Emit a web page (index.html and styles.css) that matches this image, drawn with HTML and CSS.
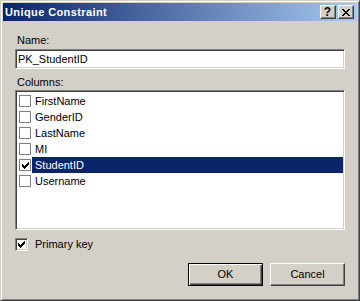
FILE: index.html
```html
<!DOCTYPE html>
<html>
<head>
<meta charset="utf-8">
<link rel="stylesheet" href="styles.css">
</head>
<body>
<div class="window">
  <div class="titlebar">
    <span class="title">Unique Constraint</span>
    <div class="capbtns">
      <div class="capbtn help">?</div>
      <div class="capbtn close">
        <svg width="8" height="7" viewBox="0 0 8 7" shape-rendering="crispEdges"><path d="M0 0h2v1h-2zM6 0h2v1h-2zM1 1h2v1h-2zM5 1h2v1h-2zM2 2h4v1h-4zM3 3h2v1h-2zM2 4h4v1h-4zM1 5h2v1h-2zM5 5h2v1h-2zM0 6h2v1h-2zM6 6h2v1h-2z" fill="#000"/></svg>
      </div>
    </div>
  </div>
  <div class="content">
    <div class="label name-label">Name:</div>
    <div class="textbox">PK_StudentID</div>
    <div class="label cols-label">Columns:</div>
    <div class="listbox">
      <div class="item"><span class="fbox"></span><span class="itext">FirstName</span></div>
      <div class="item"><span class="fbox"></span><span class="itext">GenderID</span></div>
      <div class="item"><span class="fbox"></span><span class="itext">LastName</span></div>
      <div class="item"><span class="fbox"></span><span class="itext">MI</span></div>
      <div class="item selected"><span class="fbox"><svg width="7" height="7" viewBox="0 0 7 7" shape-rendering="crispEdges"><path d="M0 2h1v3h-1zM1 3h1v3h-1zM2 4h1v3h-1zM3 3h1v3h-1zM4 2h1v3h-1zM5 1h1v3h-1zM6 0h1v3h-1z" fill="#000"/></svg></span><span class="itext">StudentID</span></div>
      <div class="item"><span class="fbox"></span><span class="itext">Username</span></div>
    </div>
    <div class="pkrow">
      <span class="cbox"><svg width="7" height="7" viewBox="0 0 7 7" shape-rendering="crispEdges"><path d="M0 2h1v3h-1zM1 3h1v3h-1zM2 4h1v3h-1zM3 3h1v3h-1zM4 2h1v3h-1zM5 1h1v3h-1zM6 0h1v3h-1z" fill="#000"/></svg></span>
      <span class="pktext">Primary key</span>
    </div>
    <div class="buttons">
      <div class="btn default"><span>OK</span></div>
      <div class="btn"><span>Cancel</span></div>
    </div>
  </div>
</div>
</body>
</html>
```
FILE: styles.css
```css
html, body {
  margin: 0;
  padding: 0;
  background: #d4d0c8;
}
body {
  font-family: "Liberation Sans", Arial, sans-serif;
  font-size: 11px;
  color: #000;
}
.window {
  width: 360px;
  height: 301px;
  box-sizing: border-box;
  border: 1px solid;
  border-color: #d4d0c8 #404040 #404040 #d4d0c8;
  box-shadow: inset 1px 1px #fff, inset -1px -1px #808080;
  padding: 2px;
  background: #d4d0c8;
  display: flex;
  flex-direction: column;
}
.titlebar {
  height: 18px;
  background: linear-gradient(to right, #0a246a, #a6caf0);
  display: flex;
  align-items: center;
  justify-content: space-between;
  padding: 0 3px 0 2px;
  flex: none;
}
.title {
  color: #fff;
  font-weight: bold;
  font-size: 11px;
  line-height: 13px;
  letter-spacing: 0.4px;
}
.capbtns {
  display: flex;
  gap: 2px;
}
.capbtn {
  width: 16px;
  height: 14px;
  box-sizing: border-box;
  background: #d4d0c8;
  border: 1px solid;
  border-color: #fff #404040 #404040 #fff;
  box-shadow: inset -1px -1px #808080;
  display: flex;
  align-items: center;
  justify-content: center;
}
.help {
  font-weight: bold;
  font-size: 12px;
  line-height: 12px;
  padding-right: 1px;
}
.close svg {
  display: block;
  margin-right: 1px;
}
.content {
  flex: 1;
  display: flex;
  flex-direction: column;
  padding: 0 12px 0 12px;
}
.label {
  line-height: 13px;
  padding-left: 2px;
}
.name-label {
  margin-top: 13px;
}
.textbox {
  margin-top: 2px;
  height: 20px;
  box-sizing: border-box;
  background: #fff;
  border: 1px solid;
  border-color: #808080 #fff #fff #808080;
  box-shadow: inset 1px 1px #404040, inset -1px -1px #d4d0c8;
  padding-left: 2px;
  line-height: 18px;
}
.cols-label {
  margin-top: 7px;
}
.listbox {
  margin-top: 1px;
  height: 140px;
  box-sizing: border-box;
  background: #fff;
  border: 1px solid;
  border-color: #808080 #fff #fff #808080;
  box-shadow: inset 1px 1px #404040, inset -1px -1px #d4d0c8;
  padding: 2px 1px 0 3px;
  display: flex;
  flex-direction: column;
}
.item {
  height: 16px;
  display: flex;
  align-items: center;
}
.fbox {
  width: 12px;
  height: 12px;
  box-sizing: border-box;
  border: 1px solid #808080;
  background: #fff;
  display: flex;
  align-items: center;
  justify-content: center;
  flex: none;
}
.fbox svg {
  display: block;
}
.itext {
  flex: 1;
  height: 16px;
  line-height: 16px;
  margin-left: 1px;
  padding-left: 3px;
}
.selected .itext {
  background: #0a246a;
  color: #fff;
}
.pkrow {
  margin-top: 8px;
  height: 13px;
  display: flex;
  align-items: center;
}
.cbox {
  width: 13px;
  height: 13px;
  box-sizing: border-box;
  border: 1px solid;
  border-color: #808080 #fff #fff #808080;
  box-shadow: inset 1px 1px #404040, inset -1px -1px #d4d0c8;
  background: #fff;
  display: flex;
  align-items: center;
  justify-content: center;
  flex: none;
}
.cbox svg {
  display: block;
}
.pktext {
  margin-left: 7px;
  line-height: 13px;
}
.buttons {
  margin-top: 12px;
  display: flex;
  justify-content: flex-end;
  gap: 7px;
}
.btn {
  width: 75px;
  height: 23px;
  box-sizing: border-box;
  border: 1px solid;
  border-color: #fff #404040 #404040 #fff;
  box-shadow: inset -1px -1px #808080;
  display: flex;
  align-items: center;
  justify-content: center;
  line-height: 13px;
}
.btn.default {
  border: 1px solid #000;
  box-shadow: inset 1px 1px #fff, inset -1px -1px #404040, inset -2px -2px #808080;
}
```
